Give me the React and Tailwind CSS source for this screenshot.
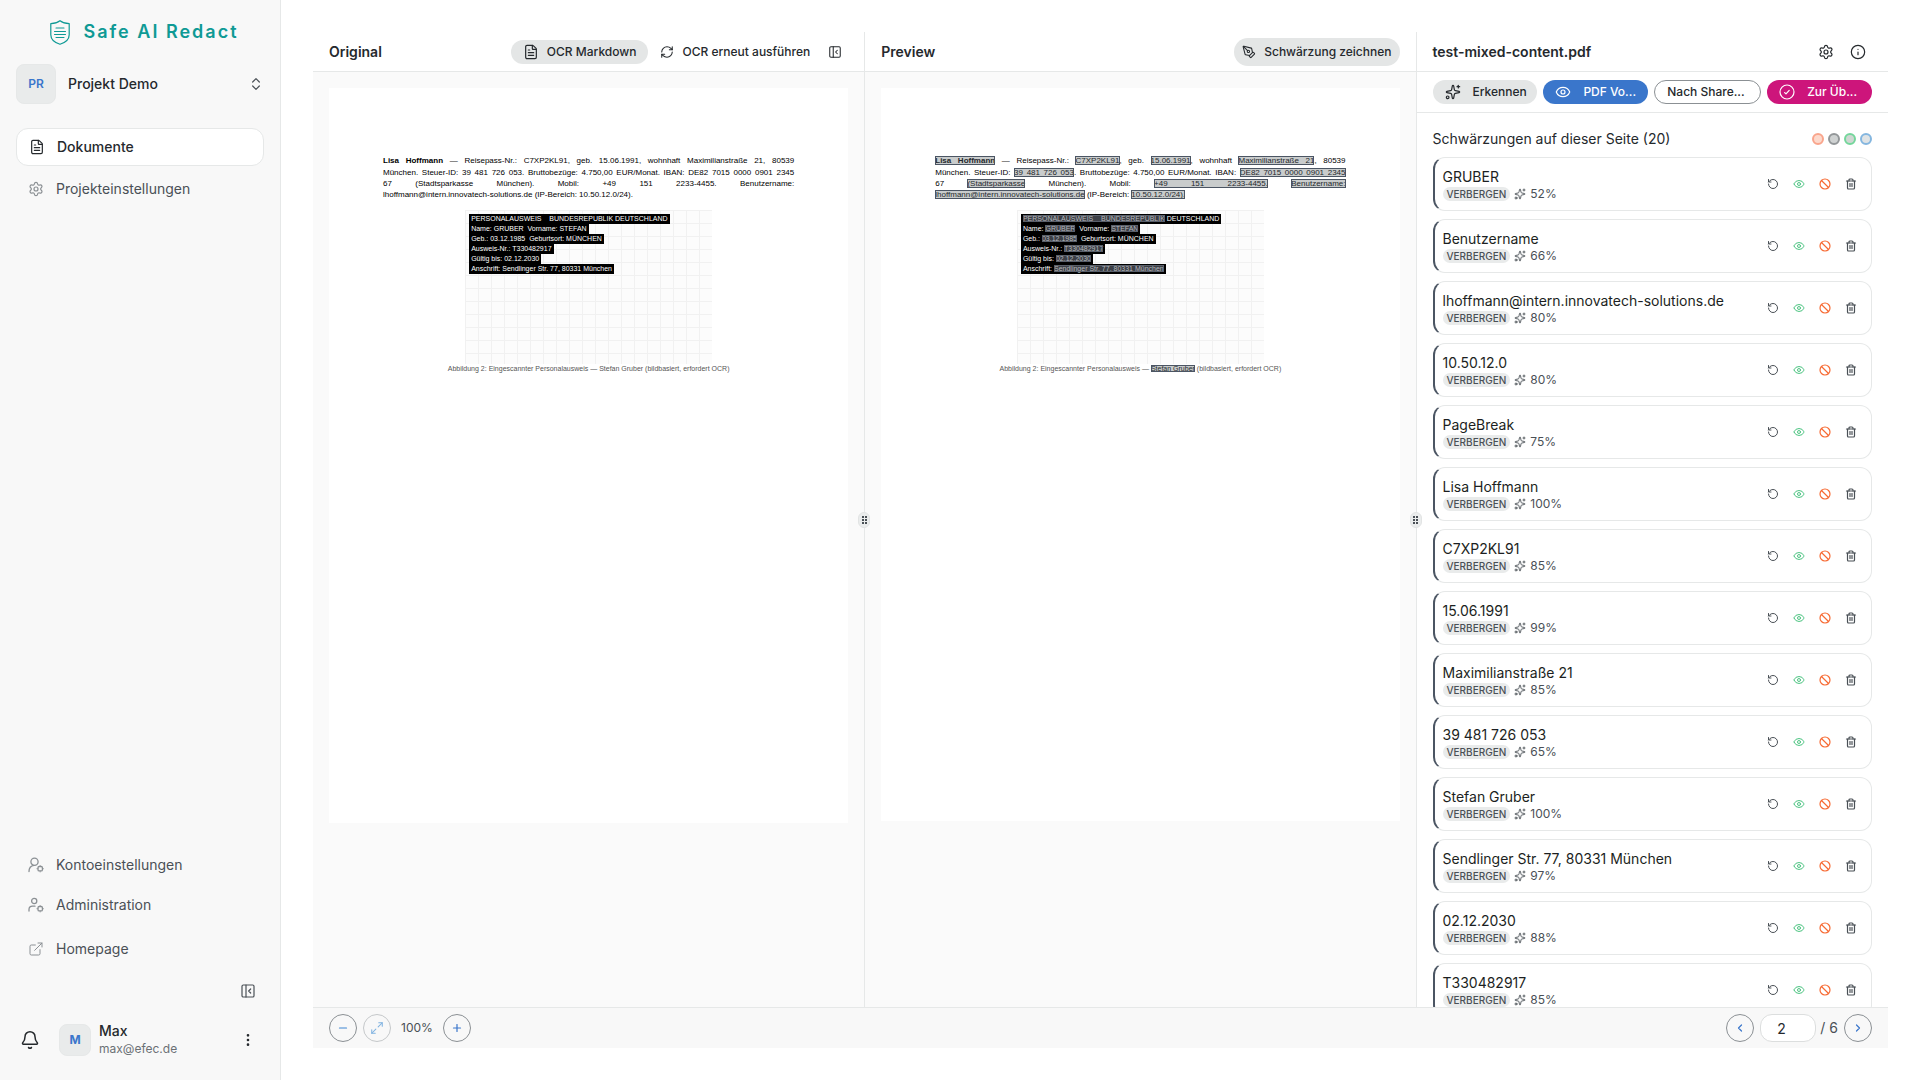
import { useState } from 'react'
import {
  Ban, Bell, ChevronLeft, ChevronRight, ChevronsUpDown, EllipsisVertical, ExternalLink, Eye,
  FileText, Info, Maximize2, Minus, PanelLeftClose, PenTool, Plus, RefreshCw, RotateCcw,
  Settings, Sparkles, Trash2,
} from 'lucide-react'

const redactions = [
  { text: 'GRUBER', score: 52 },
  { text: 'Benutzername', score: 66 },
  { text: 'lhoffmann@intern.innovatech-solutions.de', score: 80 },
  { text: '10.50.12.0', score: 80 },
  { text: 'PageBreak', score: 75 },
  { text: 'Lisa Hoffmann', score: 100 },
  { text: 'C7XP2KL91', score: 85 },
  { text: '15.06.1991', score: 99 },
  { text: 'Maximilianstraße 21', score: 85 },
  { text: '39 481 726 053', score: 65 },
  { text: 'Stefan Gruber', score: 100 },
  { text: 'Sendlinger Str. 77, 80331 München', score: 97 },
  { text: '02.12.2030', score: 88 },
  { text: 'T330482917', score: 85 },
]

function Logo() {
  return (
    <svg viewBox="0 0 20 25" className="w-5 h-[25px]" fill="none" stroke="#0f9a95" strokeLinecap="round" strokeLinejoin="round">
      <path d="M10 .7C7.6 2.6 4.6 3.5 .8 3.6v11.2C.8 19.6 4.5 22.6 10 24.3c5.5-1.7 9.2-4.7 9.2-9.5V3.6C15.4 3.5 12.4 2.6 10 .7z" strokeWidth="1.2" />
      <path d="M6 8h8M4.5 11.5h11M4.5 14.5h11M6 17.5h8" strokeWidth="1.1" />
    </svg>
  )
}

function UserGear({ small }) {
  return (
    <svg viewBox="0 0 16 16" className="size-4" fill="none" stroke="currentColor" strokeWidth="1.3" strokeLinecap="round">
      {small ? <circle cx="6.2" cy="4" r="2.6" /> : <circle cx="6.5" cy="4.7" r="3.6" />}
      {small ? <path d="M1 14v-1.5c0-2 1.5-3.3 3.5-3.3h2.5" /> : <path d="M1 14.5c0-3.3 2-5.8 5-6.2" />}
      <rect x="10" y="9.5" width="4.4" height="4.4" rx="1.2" />
      <path d="M12.2 8.5v1M12.2 14v1M8.9 11.7h1M14.5 11.7h1" strokeWidth=".8" />
    </svg>
  )
}

function CircleTick() {
  return (
    <svg viewBox="0 0 16 16" className="size-4" fill="none" stroke="currentColor" strokeWidth="1.2" strokeLinecap="round" strokeLinejoin="round">
      <circle cx="8" cy="8" r="7" />
      <path d="M5.6 8.6l1.4 1.2 3.2-3.4" />
    </svg>
  )
}

function NavLink({ icon, children }) {
  return (
    <a href="#" className="flex items-center gap-3 px-3 h-10 text-[#4a5056]">
      <span className="text-[#8b9094]">{icon}</span>
      {children}
    </a>
  )
}

function Sidebar() {
  return (
    <aside className="flex flex-col w-[281px] shrink-0 border-r border-[#e6e8e8] bg-[#f8f8f8] px-4 pb-[22px]">
      <div className="flex items-center justify-center gap-3.5 h-16 pl-2 text-[#0f9a95]">
        <Logo />
        <span className="text-lg font-semibold tracking-[2px]">Safe AI Redact</span>
      </div>

      <button className="flex items-center gap-3 text-left">
        <span className="grid place-items-center size-10 rounded-lg border border-[#e6e8e8] bg-[#e9ebeb] text-xs font-semibold text-[#3a76cb]">PR</span>
        <span className="flex-1 text-sm font-medium text-[#25292d]">Projekt Demo</span>
        <ChevronsUpDown className="size-4 text-[#4a5056]" strokeWidth={1.8} />
      </button>

      <nav className="mt-6 text-sm">
        <a href="#" className="flex items-center gap-3 h-[38px] px-3 rounded-xl border border-[#e6e8e8] bg-white font-medium text-[#25292d]">
          <FileText className="size-4" strokeWidth={1.8} />
          Dokumente
        </a>
        <a href="#" className="flex items-center gap-3 h-[46px] px-3 text-[#4a5056]">
          <Settings className="size-4 text-[#8b9094]" strokeWidth={1.8} />
          Projekteinstellungen
        </a>
      </nav>

      <nav className="mt-auto text-sm">
        <NavLink icon={<UserGear />}>Kontoeinstellungen</NavLink>
        <NavLink icon={<UserGear small />}>Administration</NavLink>
        <div className="mt-1">
          <NavLink icon={<ExternalLink className="size-4" strokeWidth={1.5} />}>Homepage</NavLink>
        </div>
      </nav>

      <div className="flex justify-end pt-[14px] pr-2 pb-[23px]">
        <button aria-label="Seitenleiste einklappen" className="text-[#4a5056]">
          <PanelLeftClose className="size-4" strokeWidth={1.8} />
        </button>
      </div>

      <div className="flex items-center">
        <button aria-label="Benachrichtigungen" className="px-1 text-[#25292d]">
          <Bell className="size-5" strokeWidth={1.8} />
        </button>
        <span className="ml-[15px] grid place-items-center size-8 rounded-lg border border-[#e6e8e8] bg-[#e9ebeb] text-xs font-bold text-[#3a76cb]">M</span>
        <div className="ml-2 flex-1 text-[#25292d]">
          <p className="text-sm leading-[18px] font-medium">Max</p>
          <p className="text-xs leading-[18px] text-[#6b7075]">max@efec.de</p>
        </div>
        <button aria-label="Kontomenü" className="pr-2 text-[#25292d]">
          <EllipsisVertical className="size-4" />
        </button>
      </div>
    </aside>
  )
}

// Highlighted only in the preview, plain text in the original
function Hit({ on, dark, children }) {
  if (!on) return children
  return dark
    ? <mark className="bg-[#3c3f46] text-[#b5b8bc] outline-1 -outline-offset-1 outline-[#5a606b]">{children}</mark>
    : <mark className="bg-[#c9cccc] text-[#25292d] outline-1 -outline-offset-1 outline-[#4b5563]">{children}</mark>
}

function DocumentPage({ on }) {
  const line = 'text-justify [text-align-last:justify]'
  const scan = 'w-fit bg-black px-0.5 h-[10px] whitespace-pre'
  return (
    <div className="aspect-[518/733] bg-white px-[54px] pt-[67px] font-['Liberation_Sans',sans-serif] text-[8px] leading-[11px] text-black">
      <div className="whitespace-nowrap">
        <p className={line}>
          <Hit on={on}><b>Lisa Hoffmann</b></Hit> — Reisepass-Nr.: <Hit on={on}>C7XP2KL91</Hit>, geb. <Hit on={on}>15.06.1991</Hit>, wohnhaft <Hit on={on}>Maximilianstraße 21</Hit>, 80539
        </p>
        <p className={`mt-px ${line}`}>
          München. Steuer-ID: <Hit on={on}>39 481 726 053</Hit>. Bruttobezüge: 4.750,00 EUR/Monat. IBAN: <Hit on={on}>DE82 7015 0000 0901 2345</Hit>
        </p>
        <p className={line}>
          67 <Hit on={on}>(Stadtsparkasse</Hit> München). Mobil: <Hit on={on}>+49 151 2233-4455.</Hit> <Hit on={on}>Benutzername:</Hit>
        </p>
        <p><Hit on={on}>lhoffmann@intern.innovatech-solutions.de</Hit> (IP-Bereich: <Hit on={on}>10.50.12.0/24).</Hit></p>
      </div>

      <figure className="mt-[10px] text-[7px]">
        <div className="mx-auto w-[247px] h-[154px] bg-[#fcfcfc] bg-[linear-gradient(#f1f1f1_1px,transparent_1px),linear-gradient(90deg,#f1f1f1_1px,transparent_1px)] bg-[size:13px_13px] pl-1 pt-1 text-white leading-[10px]">
          <p className={scan}><Hit on={on} dark>PERSONALAUSWEIS    BUNDESREPUBLIK</Hit> DEUTSCHLAND</p>
          <p className={scan}>Name: <Hit on={on} dark>GRUBER</Hit>  Vorname: <Hit on={on} dark>STEFAN</Hit></p>
          <p className={scan}>Geb.: <Hit on={on} dark>03.12.1985</Hit>  Geburtsort: MÜNCHEN</p>
          <p className={scan}>Ausweis-Nr.: <Hit on={on} dark>T330482917</Hit></p>
          <p className={scan}>Gültig bis: <Hit on={on} dark>02.12.2030</Hit></p>
          <p className={scan}>Anschrift: <Hit on={on} dark>Sendlinger Str. 77, 80331 München</Hit></p>
        </div>
        <figcaption className="text-center leading-[10px] whitespace-nowrap text-[#555]">
          Abbildung 2: Eingescannter Personalausweis — <Hit on={on}>Stefan Gruber</Hit> (bildbasiert, erfordert OCR)
        </figcaption>
      </figure>
    </div>
  )
}

function ResizeHandle() {
  return (
    <div className="absolute top-[480px] -right-1.5 z-10 grid grid-cols-[2px_2px] place-content-center gap-px w-3 h-4 rounded-full border border-[#e2e4e4] bg-[#ebeded]">
      {[0, 1, 2, 3, 4, 5].map(i => <span key={i} className="size-0.5 bg-[#4a5056]" />)}
    </div>
  )
}

function Panel({ title, actions, children }) {
  return (
    <section className="relative flex flex-col w-[35%] border-l border-[#e6e8e8] first:border-l-0">
      <header className="flex items-center justify-between h-10 shrink-0 px-4 border-b border-[#e6e8e8] bg-white">
        <h2 className="text-sm font-semibold text-[#25292d]">{title}</h2>
        <div className="flex items-center text-xs font-medium text-[#25292d]">{actions}</div>
      </header>
      <div className="flex-1 min-h-0 overflow-hidden bg-[#fafafa] p-4">{children}</div>
      <ResizeHandle />
    </section>
  )
}

function RedactionCard({ text, score }) {
  return (
    <li className="flex items-center justify-between h-[54px] shrink-0 rounded-xl border border-l-2 border-[#e6e8e8] border-l-[#4b5563] bg-white pl-2 pr-[11px]">
      <div>
        <p className="text-sm leading-5 text-[#1c1f22]">{text}</p>
        <p className="flex items-center text-xs leading-[14px] text-[#4a5056]">
          <span className="px-1 rounded-full bg-[#e9ebeb] text-[10px] font-medium">VERBERGEN</span>
          <Sparkles className="mx-1 size-3" strokeWidth={1.8} />
          {score}%
        </p>
      </div>
      <div className="flex gap-2 text-[#4a5056]">
        <button aria-label="Zurücksetzen" className="grid place-items-center w-[18px]"><RotateCcw className="size-3" /></button>
        <button aria-label="Anzeigen" className="grid place-items-center w-[18px] text-[#4fc583]"><Eye className="size-3" /></button>
        <button aria-label="Ignorieren" className="grid place-items-center w-[18px] text-[#f76a33]"><Ban className="size-3" strokeWidth={2.4} /></button>
        <button aria-label="Löschen" className="grid place-items-center w-[18px]"><Trash2 className="size-3" strokeWidth={2.4} /></button>
      </div>
    </li>
  )
}

function RedactionPanel() {
  return (
    <section className="flex flex-col w-[30%] border-l border-[#e6e8e8] bg-white text-[#25292d]">
      <header className="flex items-center h-10 shrink-0 pl-4 pr-3.5 border-b border-[#e6e8e8]">
        <h2 className="flex-1 text-sm font-semibold">test-mixed-content.pdf</h2>
        <button aria-label="Einstellungen" className="px-2"><Settings className="size-4" strokeWidth={1.8} /></button>
        <button aria-label="Informationen" className="px-2"><Info className="size-4" strokeWidth={1.8} /></button>
      </header>

      <div className="flex gap-1.5 px-4 py-2 border-b border-[#e6e8e8] text-xs font-medium">
        <button className="flex flex-1 items-center gap-3 h-6 pl-3 rounded-full bg-[#e4e6e6]">
          <Sparkles className="size-4" strokeWidth={1.8} />Erkennen
        </button>
        <button className="flex flex-1 items-center gap-3 h-6 pl-3 rounded-full bg-[#3a76cb] text-white">
          <Eye className="size-4" strokeWidth={1.8} />PDF Vo...
        </button>
        <button className="flex flex-1 items-center h-6 pl-3 rounded-full border border-[#8b9094]">Nach Share...</button>
        <button className="flex flex-1 items-center gap-3 h-6 pl-3 rounded-full bg-[#cd157b] text-white">
          <CircleTick />Zur Üb...
        </button>
      </div>

      <div className="flex flex-col flex-1 min-h-0 overflow-hidden px-4 pt-4">
        <div className="flex items-center justify-between h-5">
          <h3 className="text-sm">Schwärzungen auf dieser Seite (20)</h3>
          <div className="flex gap-1">
            <span className="size-3 rounded-full border-2 border-[#f9a58c] bg-[#fdd9cc]" />
            <span className="size-3 rounded-full border-2 border-[#939799] bg-[#cfd2d2]" />
            <span className="size-3 rounded-full border-2 border-[#74d69b] bg-[#cfd6d2]" />
            <span className="size-3 rounded-full border-2 border-[#84b6df] bg-[#dfe3e5]" />
          </div>
        </div>
        <ul className="flex flex-col gap-2 mt-2">
          {redactions.map(r => <RedactionCard key={r.text} {...r} />)}
        </ul>
      </div>
    </section>
  )
}

function Footer() {
  const [page, setPage] = useState('2')
  const round = 'grid place-items-center size-7 rounded-full border border-[#8b9094]'
  return (
    <footer className="flex items-center justify-between h-[41px] shrink-0 px-4 border-t border-[#e6e8e8] bg-[#f8f8f8] text-[#4a5056]">
      <div className="flex items-center gap-1.5">
        <button aria-label="Verkleinern" className={round}><Minus className="size-3 text-[#3f86d2]" strokeWidth={2.4} /></button>
        <button aria-label="Einpassen" className="grid place-items-center size-7 rounded-full border border-[#c5c8ca]">
          <Maximize2 className="size-[14px] text-[#7fb2e0]" strokeWidth={1.8} />
        </button>
        <span className="w-10 text-center text-xs">100%</span>
        <button aria-label="Vergrößern" className={round}><Plus className="size-3 text-[#3a76cb]" strokeWidth={2.4} /></button>
      </div>
      <div className="flex items-center gap-1.5">
        <button aria-label="Vorherige Seite" className={round}><ChevronLeft className="size-3 text-[#3a76cb]" strokeWidth={2.4} /></button>
        <label className="flex items-center gap-1 text-sm">
          <input
            aria-label="Seite"
            value={page}
            onChange={e => setPage(e.target.value)}
            className="w-14 h-7 rounded-xl border border-[#dcdede] bg-white pl-4 text-[#25292d]"
          />
          / 6
        </label>
        <button aria-label="Nächste Seite" className={round}><ChevronRight className="size-3 text-[#3a76cb]" strokeWidth={2.4} /></button>
      </div>
    </footer>
  )
}

export default function App() {
  return (
    <div className="flex h-screen bg-white font-[Inter,sans-serif]">
      <Sidebar />
      <main className="flex flex-col flex-1 min-w-0 p-8">
        <div className="flex flex-1 min-h-0">
          <Panel
            title="Original"
            actions={<>
              <button className="flex items-center gap-2 h-6 px-3 rounded-full bg-[#e4e6e6]">
                <FileText className="size-4" strokeWidth={1.8} />OCR Markdown
              </button>
              <button className="flex items-center gap-2 h-6 px-3">
                <RefreshCw className="size-[14px]" strokeWidth={1.8} />OCR erneut ausführen
              </button>
              <button aria-label="Original einklappen" className="px-1.5">
                <PanelLeftClose className="size-[14px]" strokeWidth={1.8} />
              </button>
            </>}
          >
            <DocumentPage />
          </Panel>
          <Panel
            title="Preview"
            actions={
              <button className="flex items-center gap-2 h-7 px-2 rounded-full bg-[#e4e6e6]">
                <PenTool className="size-[14px]" strokeWidth={1.8} />Schwärzung zeichnen
              </button>
            }
          >
            <DocumentPage on />
          </Panel>
          <RedactionPanel />
        </div>
        <Footer />
      </main>
    </div>
  )
}
